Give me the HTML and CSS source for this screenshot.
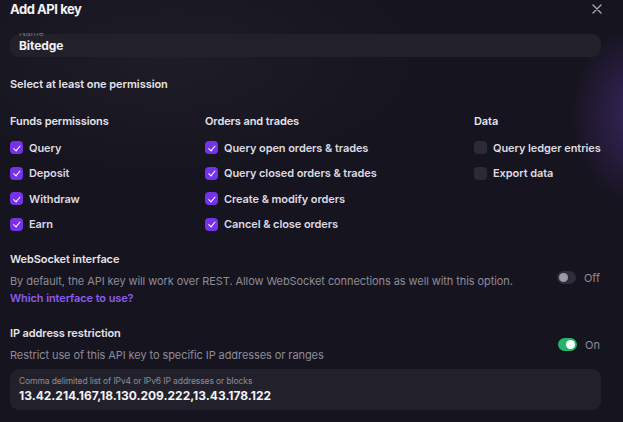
FILE: index.html
```html
<!DOCTYPE html>
<html>
<head>
<meta charset="utf-8">
<link rel="stylesheet" href="styles.css">
</head>
<body>
<div class="modal">
  <header class="head">
    <h1 class="title">Add API key</h1>
    <button class="close" aria-label="Close">
      <svg width="10" height="10" viewBox="0 0 10 10"><path d="M1 1L9 9M9 1L1 9" stroke="#a9a7b3" stroke-width="1.4" stroke-linecap="round"/></svg>
    </button>
  </header>
  <div class="body">
    <div class="field name-field">
      <span class="field-label">Name</span>
      <span class="field-value">Bitedge</span>
    </div>
    <div class="section-title">Select at least one permission</div>
    <div class="perms">
      <div class="col col-funds">
        <div class="col-title">Funds permissions</div>
        <label class="item"><span class="cb on"></span>Query</label>
        <label class="item"><span class="cb on"></span>Deposit</label>
        <label class="item"><span class="cb on"></span>Withdraw</label>
        <label class="item"><span class="cb on"></span>Earn</label>
      </div>
      <div class="col col-orders">
        <div class="col-title">Orders and trades</div>
        <label class="item"><span class="cb on"></span>Query open orders &amp; trades</label>
        <label class="item"><span class="cb on"></span>Query closed orders &amp; trades</label>
        <label class="item"><span class="cb on"></span>Create &amp; modify orders</label>
        <label class="item"><span class="cb on"></span>Cancel &amp; close orders</label>
      </div>
      <div class="col col-data">
        <div class="col-title">Data</div>
        <label class="item"><span class="cb"></span>Query ledger entries</label>
        <label class="item"><span class="cb"></span>Export data</label>
      </div>
    </div>
    <div class="opt ws">
      <div class="opt-text">
        <div class="opt-title">WebSocket interface</div>
        <div class="opt-desc">By default, the API key will work over REST. Allow WebSocket connections as well with this option.</div>
        <a class="link" href="#">Which interface to use?</a>
      </div>
      <div class="toggle-wrap"><span class="toggle"></span><span class="toggle-label">Off</span></div>
    </div>
    <div class="opt ip">
      <div class="opt-text">
        <div class="opt-title">IP address restriction</div>
        <div class="opt-desc">Restrict use of this API key to specific IP addresses or ranges</div>
      </div>
      <div class="toggle-wrap"><span class="toggle on"></span><span class="toggle-label">On</span></div>
    </div>
    <div class="field ip-field">
      <span class="field-label small">Comma delimited list of IPv4 or IPv6 IP addresses or blocks</span>
      <span class="field-value ipv">13.42.214.167,18.130.209.222,13.43.178.122</span>
    </div>
  </div>
</div>
</body>
</html>
```
FILE: styles.css
```css
* { box-sizing: border-box; }
html, body { margin: 0; height: 100%; }
body {
  width: 623px;
  height: 422px;
  overflow: hidden;
  background:
    radial-gradient(ellipse 70px 90px at 640px 115px, rgba(88,52,150,0.55), rgba(88,52,150,0) 100%),
    radial-gradient(ellipse 260px 120px at 170px 60px, rgba(255,255,255,0.035), rgba(255,255,255,0) 100%),
    #16141f;
  font-family: Inter, "Noto Sans", sans-serif;
  color: #ecebf0;
}
.modal { width: 611px; padding: 0 10px; }
.head {
  display: flex;
  justify-content: space-between;
  align-items: center;
  height: 17px;
}
.title { margin: 0; font-size: 13px; font-weight: 700; letter-spacing: -0.45px; color: #f2f1f5; }
.close { background: none; border: 0; padding: 0; width: 10px; height: 10px; display: flex; margin-right: -1px; }
.field {
  background: #22212b;
  border-radius: 9px;
  display: flex;
  flex-direction: column;
  padding: 0 9px;
}
.name-field {
  margin-top: 17px;
  height: 23px;
  position: relative;
  justify-content: flex-end;
  padding-bottom: 4px;
}
.name-field .field-label {
  position: absolute;
  top: -7px;
  left: 9px;
  font-size: 9px;
  color: #6f6d79;
  clip-path: inset(6px 0 0 0);
}
.field-value { font-size: 12px; font-weight: 700; color: #f2f1f5; letter-spacing: -0.1px; }
.section-title { margin-top: 20px; font-size: 11px; font-weight: 600; color: #e4e3ea; letter-spacing: -0.05px; }
.perms { display: flex; margin-top: 23px; }
.col { display: flex; flex-direction: column; gap: 9.5px; }
.col-funds { width: 195px; }
.col-orders { width: 269px; }
.col-title { font-size: 11px; font-weight: 600; color: #e4e3ea; letter-spacing: -0.1px; margin-bottom: 2px; }
.item { display: flex; align-items: center; gap: 6px; font-size: 11px; font-weight: 600; color: #dcdbe2; height: 16px; letter-spacing: -0.08px; }
.cb { width: 13px; height: 13px; border-radius: 4px; background: #2c2a37; flex: none; position: relative; }
.cb.on { background: #7433ea; }
.cb.on::after {
  content: "";
  position: absolute;
  left: 4.5px; top: 2.5px;
  width: 3px; height: 5.5px;
  border: solid #fff;
  border-width: 0 1.3px 1.3px 0;
  transform: rotate(40deg);
}
.opt { display: flex; justify-content: space-between; align-items: center; }
.ws { margin-top: 20px; }
.ip { margin-top: 21px; }
.opt-title { font-size: 11px; font-weight: 600; color: #e4e3ea; letter-spacing: -0.1px; }
.opt-desc { font-size: 11px; color: #8e8c98; margin-top: 8px; letter-spacing: -0.08px; }
.link { display: block; font-size: 11px; font-weight: 600; color: #8c5cf0; text-decoration: none; margin-top: 3px; letter-spacing: -0.1px; }
.toggle-wrap { display: flex; align-items: center; gap: 8px; margin-right: 1px; }
.ws .toggle-wrap { margin-top: -2px; }
.ip .toggle-wrap { margin-top: 1px; }
.toggle { width: 19px; height: 13px; border-radius: 7px; background: #2f2d38; position: relative; }
.toggle::after { content: ""; position: absolute; left: 2px; top: 2px; width: 9px; height: 9px; border-radius: 50%; background: #9c9aa6; }
.toggle.on { background: #25b46a; }
.toggle.on::after { left: 8px; background: #fff; }
.toggle-label { font-size: 11px; color: #8e8c98; }
.ip-field { margin-top: 7px; height: 41px; justify-content: center; gap: 2px; }
.field-label.small { font-size: 8.5px; color: #8e8c98; letter-spacing: -0.1px; }
.ipv { font-size: 12px; letter-spacing: 0; }
```
